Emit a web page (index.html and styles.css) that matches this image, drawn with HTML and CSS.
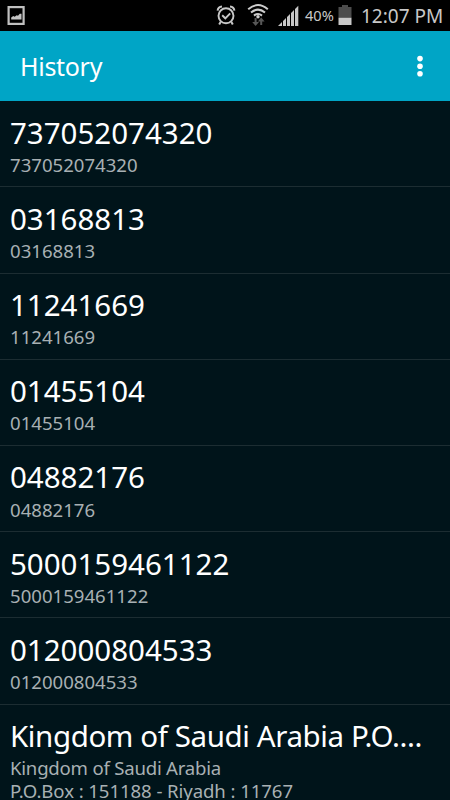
FILE: index.html
```html
<!DOCTYPE html>
<html lang="en">
<head>
    <meta charset="UTF-8">
    <meta name="viewport" content="width=device-width, initial-scale=1.0">
    <title>History</title>
    <link rel="stylesheet" href="styles.css">
</head>
<body>
    <div class="status-bar">
        <svg class="icon-picture" width="18" height="20" viewBox="0 0 18 20">
            <rect x="1.6" y="1.1" width="15" height="16.8" fill="none" stroke="#c0c0c0" stroke-width="2.2"/>
            <path d="M4.2 13.5v-2l2-1.5 1.5.7 2-1.5 1.3.5 1.8-2h1.7v5.8z" fill="#c4c4c4"/>
        </svg>
        <div class="status-icons">
            <svg class="icon-alarm" width="20" height="22" viewBox="0 0 20 22" fill="none" stroke="#c8c8c8">
                <circle cx="10" cy="11.8" r="7.5" stroke-width="1.9"/>
                <path d="M6.2 11.3l3.1 3 4.9-5" stroke-width="1.9"/>
                <path d="M1.6 6.6Q2 3.1 6 2.6M18.4 6.6Q18 3.1 14 2.6M4.6 18l-1.4 2.5M15.4 18l1.4 2.5" stroke-width="2"/>
            </svg>
            <svg class="icon-wifi" width="22" height="24" viewBox="0 0 22 24" fill="none">
                <path d="M1.2 6.3Q11 -2.2 20.8 6.3M4 9.6Q11 3.6 18 9.6M7 12.6Q11 9.4 15 12.6" stroke="#cdcdcd" stroke-width="2"/>
                <circle cx="11" cy="13.8" r="1.7" fill="#cdcdcd"/>
                <path d="M8.6 15v5M14.2 22v-5" stroke="#575757" stroke-width="2"/>
                <path d="M5.2 19h6.8l-3.4 4zM10.8 18.6h6.8l-3.4-4z" fill="#575757"/>
            </svg>
            <svg class="icon-signal" width="21" height="22" viewBox="0 0 21 22" fill="#c8c8c8">
                <path d="M0 21l4-4v4zM5 21v-5l3-3v8zM9 21v-9l3-3v12zM13 21V8l3-3v16zM17 21V4l3.3-3.3V21z"/>
            </svg>
            <span class="battery-level">40%</span>
            <svg class="icon-battery" width="14" height="20" viewBox="0 0 14 20">
                <path d="M4 0h6v2h3.5v11H.5V2H4z" fill="#4c4c4c"/>
                <path d="M.5 12.8h13V20H.5z" fill="#c8c8c8"/>
            </svg>
            <span class="clock">12:07 PM</span>
        </div>
    </div>

    <div class="action-bar">
        <h1>History</h1>
        <svg class="icon-menu" width="6" height="22" viewBox="0 0 6 22" fill="#fff">
            <circle cx="3" cy="3.6" r="2.8"/>
            <circle cx="3" cy="11.3" r="2.8"/>
            <circle cx="3" cy="18.8" r="2.8"/>
        </svg>
    </div>

    <ul class="history">
        <li>
            <div class="title">737052074320</div>
            <div class="detail">737052074320</div>
        </li>
        <li>
            <div class="title">03168813</div>
            <div class="detail">03168813</div>
        </li>
        <li>
            <div class="title">11241669</div>
            <div class="detail">11241669</div>
        </li>
        <li>
            <div class="title">01455104</div>
            <div class="detail">01455104</div>
        </li>
        <li>
            <div class="title">04882176</div>
            <div class="detail">04882176</div>
        </li>
        <li>
            <div class="title">5000159461122</div>
            <div class="detail">5000159461122</div>
        </li>
        <li>
            <div class="title">012000804533</div>
            <div class="detail">012000804533</div>
        </li>
        <li>
            <div class="title address">Kingdom of Saudi Arabia P.O....</div>
            <div class="detail country">Kingdom of Saudi Arabia</div>
            <div class="detail po-box">P.O.Box : 151188 - Riyadh : 11767</div>
        </li>
    </ul>
</body>
</html>
```
FILE: styles.css
```css
* {
    box-sizing: border-box;
}
body {
    margin: 0;
    height: 800px;
    overflow: hidden;
    display: flex;
    flex-direction: column;
    background: #00141a;
    color: #fff;
    font-family: "Noto Sans", sans-serif;
}
svg {
    display: block;
    flex: none;
}
.status-bar {
    flex: none;
    height: 31px;
    display: flex;
    justify-content: space-between;
    align-items: flex-start;
    padding: 0 7px;
    background: #000;
    color: #c8c8c8;
}
.icon-picture {
    margin-top: 6px;
}
.status-icons {
    display: flex;
    align-items: flex-start;
}
.icon-alarm {
    margin: 4px 11px 0 0;
}
.icon-wifi {
    margin: 3px 9px 0 0;
}
.icon-signal {
    margin: 5px 6px 0 0;
}
.battery-level {
    width: 31px;
    margin-right: 2px;
    font-size: 14.6px;
    line-height: 31px;
}
.icon-battery {
    margin: 5px 9px 0 0;
}
.clock {
    width: 82px;
    font-size: 19px;
    line-height: 33px;
    white-space: nowrap;
}
.action-bar {
    flex: none;
    height: 70px;
    display: flex;
    justify-content: space-between;
    align-items: center;
    padding: 0 27px 0 20px;
    background: #00a5c6;
}
.action-bar h1 {
    margin: 0;
    font-size: 25px;
    font-weight: normal;
    line-height: 70px;
    letter-spacing: -0.3px;
}
.history {
    flex: none;
    list-style: none;
    margin: 0;
    padding: 0.3px 0 0;
}
.history li {
    height: 86.2px;
    padding: 9.3px 10px 0;
    border-bottom: 1px solid #1c2d32;
}
.history li:last-child {
    height: auto;
    border-bottom: none;
}
.title {
    font-size: 29.5px;
    line-height: 43px;
    white-space: nowrap;
}
.title.address {
    letter-spacing: -0.4px;
}
.detail {
    font-size: 18.6px;
    line-height: 23px;
    color: #a8b0b3;
    white-space: nowrap;
}
.title + .detail {
    margin-top: -0.8px;
}
.detail.country {
    letter-spacing: -0.22px;
}
.detail.po-box {
    letter-spacing: -0.08px;
}
```
